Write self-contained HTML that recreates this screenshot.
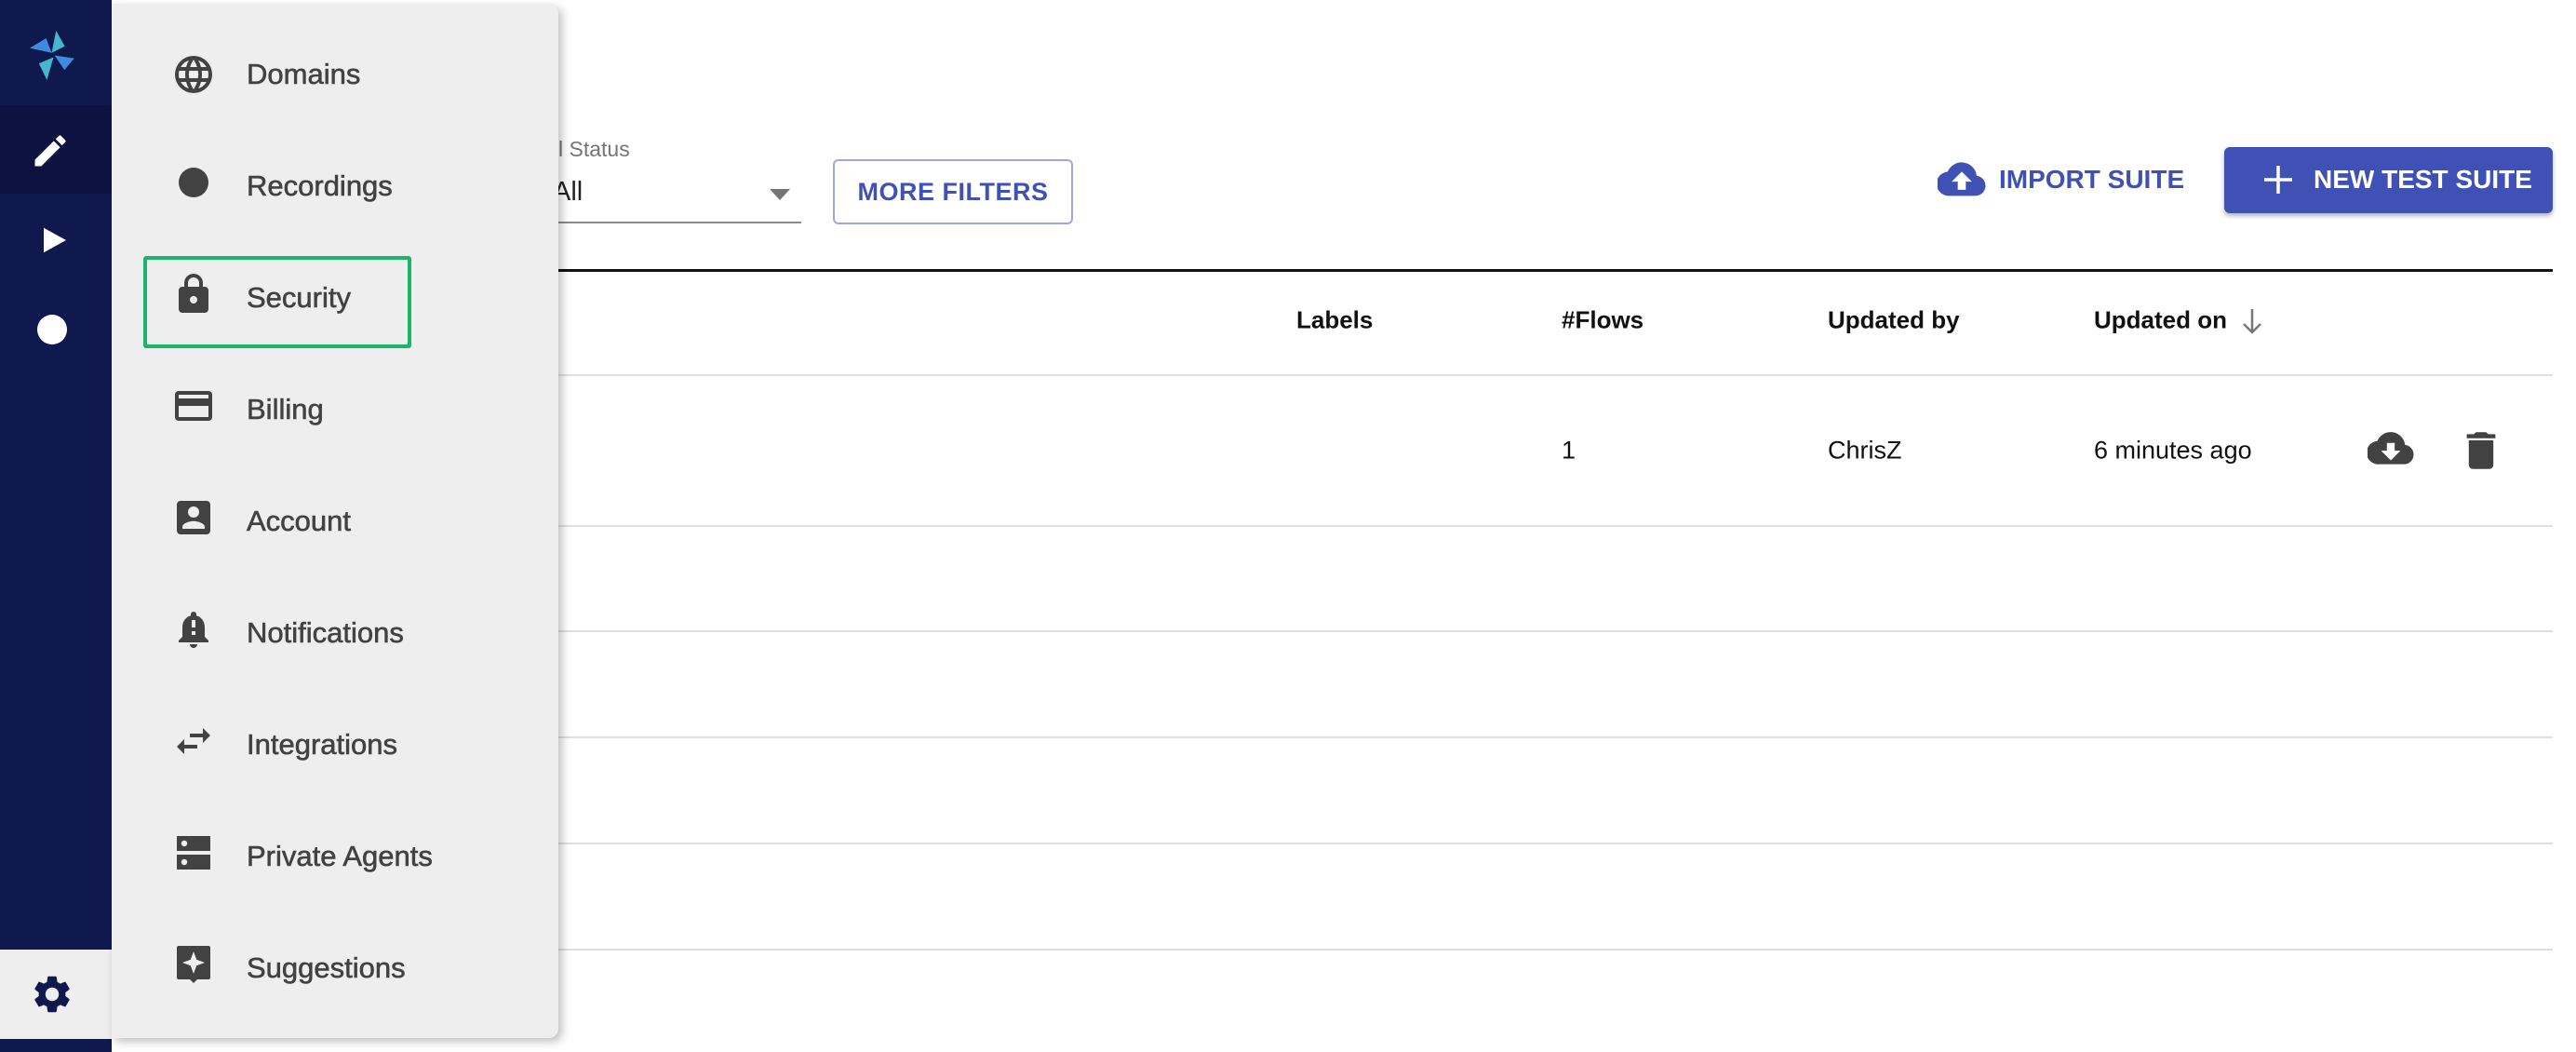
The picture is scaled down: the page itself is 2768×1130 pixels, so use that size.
<!DOCTYPE html>
<html><head><meta charset="utf-8"><style>
*{margin:0;padding:0;box-sizing:border-box}
body{width:2768px;height:1130px;background:#fff;position:relative;overflow:hidden;font-family:"Liberation Sans",sans-serif}
.a{position:absolute}
.side{left:0;top:0;width:120px;height:1130px;background:#10194d}
.menu{left:120px;top:4px;width:480px;height:1111px;background:#eeeeee;border-radius:0 10px 10px 0;box-shadow:4px 4px 10px rgba(0,0,0,.25)}
.mi{position:absolute;left:265px;font-size:31px;color:#424242;transform:translateY(-50%);white-space:nowrap;-webkit-text-stroke:0.6px #424242}
.ic{position:absolute;left:184px;width:48px;height:48px;transform:translateY(-50%)}
.th{position:absolute;font-size:26px;font-weight:bold;color:#111;top:344px;transform:translateY(-50%)}
.td{position:absolute;font-size:27px;color:#111;top:484px;transform:translateY(-50%)}
.ln{position:absolute;left:600px;width:2143px;height:2px;background:#e0e0e0}
</style></head><body>
<div class="a side"></div>
<div class="a" style="left:0;top:113px;width:120px;height:95px;background:#0d1240"></div>
<!-- logo -->
<svg class="a" style="left:32px;top:32px" width="49" height="55" viewBox="80 80 125 140">
<polygon points="80,130 125,103 140,143" fill="#3f8be0"/>
<polygon points="152,82 176,125 140,143" fill="#46b5d0"/>
<polygon points="202,158 148,150 175,190" fill="#3f8be0"/>
<polygon points="127,218 105,172 145,155" fill="#46b5d0"/>
</svg>
<!-- pencil -->
<svg class="a" style="left:32px;top:140px" width="44" height="44" viewBox="0 0 24 24"><path fill="#fff" d="M3 17.25V21h3.75L17.81 9.94l-3.75-3.75L3 17.25zM20.71 7.04a1 1 0 000-1.41l-2.34-2.34a1 1 0 00-1.41 0l-1.83 1.83 3.75 3.75 1.83-1.83z"/></svg>
<svg class="a" style="left:47px;top:244px" width="24" height="28" viewBox="0 0 10 11"><polygon points="0,0 10,5.5 0,11" fill="#fff"/></svg>
<div class="a" style="left:40px;top:338px;width:32px;height:32px;border-radius:50%;background:#fff"></div>
<div class="a" style="left:0;top:1020px;width:120px;height:96px;background:#eeeeee"></div>
<svg class="a" style="left:32px;top:1044px" width="48" height="48" viewBox="0 0 24 24"><path fill="#10194d" d="M19.14 12.94c.04-.3.06-.61.06-.94 0-.32-.02-.64-.07-.94l2.030-1.58a.49.49 0 00.12-.61l-1.92-3.32a.49.49 0 00-.59-.22l-2.39.96c-.5-.38-1.03-.7-1.62-.94l-.36-2.54a.48.48 0 00-.48-.41h-3.84c-.24 0-.43.17-.47.41l-.36 2.54c-.59.24-1.130.57-1.62.94l-2.39-.96a.48.48 0 00-.59.22L2.74 8.87a.47.47 0 00.12.61l2.03 1.58c-.05.3-.09.63-.09.94s.02.64.07.94l-2.03 1.58a.49.49 0 00-.12.61l1.92 3.32c.12.22.37.29.59.22l2.39-.96c.5.38 1.03.7 1.62.94l.36 2.54c.05.24.24.41.48.41h3.84c.24 0 .44-.17.47-.41l.36-2.54c.59-.24 1.13-.56 1.62-.94l2.39.96c.22.08.47 0 .59-.22l1.92-3.32a.46.46 0 00-.12-.61l-2.01-1.58zM12 15.6A3.6 3.6 0 1112 8.4a3.6 3.6 0 010 7.2z"/></svg>

<!-- main -->
<div class="a" style="left:600px;top:147px;font-size:23px;color:#757575">l Status</div>
<div class="a" style="left:594px;top:190px;font-size:29px;color:#222">All</div>
<div class="a" style="left:600px;top:238px;width:261px;height:2px;background:#8a8a8a"></div>
<svg class="a" style="left:827px;top:203px" width="22" height="12" viewBox="0 0 22 12"><polygon points="0,0 22,0 11,12" fill="#757575"/></svg>
<div class="a" style="left:895px;top:171px;width:258px;height:70px;border:2px solid #9fa8da;border-radius:6px;color:#3f51b5;font-size:27px;font-weight:bold;display:flex;align-items:center;justify-content:center;letter-spacing:.5px">MORE FILTERS</div>
<svg class="a" style="left:2082px;top:172px" width="52" height="42" viewBox="0 0 24 18"><path fill="#3f51b5" d="M19.35 7.04A7.49 7.49 0 005 5.04 6 6 0 006 17h13a5 5 0 00.35-9.96zM14 10v4h-4v-4H7l5-5 5 5h-3z"/></svg>
<div class="a" style="left:2148px;top:177px;font-size:28px;font-weight:bold;color:#3f51b5">IMPORT SUITE</div>
<div class="a" style="left:2390px;top:158px;width:353px;height:71px;background:#3f51b5;border-radius:6px;box-shadow:0 3px 5px rgba(0,0,0,.3)"></div>
<svg class="a" style="left:2430px;top:175px" width="36" height="36" viewBox="0 0 36 36"><path d="M18 3v30M3 18h30" stroke="#fff" stroke-width="3.5"/></svg>
<div class="a" style="left:2486px;top:177px;font-size:28px;font-weight:bold;color:#fff">NEW TEST SUITE</div>

<div class="a" style="left:600px;top:289px;width:2143px;height:3px;background:#111"></div>
<div class="th" style="left:1393px">Labels</div>
<div class="th" style="left:1678px">#Flows</div>
<div class="th" style="left:1964px">Updated by</div>
<div class="th" style="left:2250px">Updated on</div>
<svg class="a" style="left:2408px;top:330px" width="24" height="30" viewBox="0 0 24 30"><path d="M12 2v25M3 18l9 9 9-9" stroke="#777" stroke-width="2.5" fill="none"/></svg>
<div class="ln" style="top:402px"></div>
<div class="td" style="left:1678px">1</div>
<div class="td" style="left:1964px">ChrisZ</div>
<div class="td" style="left:2250px">6 minutes ago</div>
<svg class="a" style="left:2544px;top:462px" width="50" height="40" viewBox="0 0 24 18"><path fill="#424242" d="M19.35 7.04A7.49 7.49 0 005 5.04 6 6 0 006 17h13a5 5 0 00.35-9.96zM17 10l-5 5-5-5h3V6h4v4h3z"/></svg>
<svg class="a" style="left:2648px;top:462px" width="36" height="44" viewBox="4 2 16 20"><path fill="#424242" d="M6 19a2 2 0 002 2h8a2 2 0 002-2V7H6v12zM19 4h-3.5l-1-1h-5l-1 1H5v2h14V4z"/></svg>
<div class="ln" style="top:564px"></div>
<div class="ln" style="top:677px"></div>
<div class="ln" style="top:791px"></div>
<div class="ln" style="top:905px"></div>
<div class="ln" style="top:1019px"></div>

<!-- menu -->
<div class="a menu"></div>
<div class="a" style="left:154px;top:275px;width:288px;height:99px;border:4px solid #1eb36b;border-radius:3px"></div>
<svg class="ic" style="top:80px" viewBox="0 0 24 24"><path fill="#424242" d="M12 2a10 10 0 100 20 10 10 0 000-20zm6.93 6h-2.95a15.65 15.65 0 00-1.38-3.56A8.030 8.030 0 0118.93 8zM12 4.04c.83 1.2 1.48 2.53 1.91 3.96h-3.82c.43-1.43 1.08-2.76 1.91-3.960zM4.26 14C4.1 13.36 4 12.69 4 12s.1-1.36.26-2h3.38c-.08.66-.14 1.32-.14 2s.06 1.34.14 2H4.26zm.82 2h2.95c.32 1.25.78 2.45 1.38 3.56A7.99 7.99 0 015.08 16zm2.95-8H5.08a7.99 7.99 0 014.33-3.56A15.65 15.65 0 008.03 8zM12 19.96c-.83-1.2-1.48-2.53-1.91-3.96h3.82c-.43 1.43-1.08 2.76-1.91 3.96zM14.34 14H9.66c-.09-.66-.16-1.32-.16-2s.07-1.35.16-2h4.68c.09.65.16 1.32.16 2s-.07 1.34-.16 2zm.25 5.56c.6-1.11 1.06-2.31 1.38-3.56h2.95a8.03 8.03 0 01-4.33 3.56zM16.36 14c.08-.66.14-1.32.14-2s-.06-1.34-.14-2h3.38c.16.64.26 1.31.26 2s-.1 1.36-.26 2h-3.38z"/></svg>
<div class="mi" style="top:80px">Domains</div>
<svg class="ic" style="top:196px" viewBox="0 0 24 24"><circle cx="12" cy="12" r="8" fill="#424242"/></svg>
<div class="mi" style="top:200px">Recordings</div>
<svg class="ic" style="top:316px" viewBox="0 0 24 24"><path fill="#424242" d="M18 8h-1V6A5 5 0 007 6v2H6a2 2 0 00-2 2v10a2 2 0 002 2h12a2 2 0 002-2V10a2 2 0 00-2-2zm-6 9a2 2 0 110-4 2 2 0 010 4zM9 8V6a3 3 0 016 0v2H9z"/></svg>
<div class="mi" style="top:320px">Security</div>
<svg class="ic" style="top:436px" viewBox="0 0 24 24"><path fill="#424242" d="M20 4H4a2 2 0 00-2 2v12a2 2 0 002 2h16a2 2 0 002-2V6a2 2 0 00-2-2zm0 14H4v-6h16v6zm0-10H4V6h16v2z"/></svg>
<div class="mi" style="top:440px">Billing</div>
<svg class="ic" style="top:556px" viewBox="0 0 24 24"><path fill="#424242" d="M3 5v14a2 2 0 002 2h14a2 2 0 002-2V5a2 2 0 00-2-2H5a2 2 0 00-2 2zm12 4a3 3 0 11-6 0 3 3 0 016 0zm-9 8c0-2 4-3.1 6-3.1s6 1.1 6 3.1v1H6v-1z"/></svg>
<div class="mi" style="top:560px">Account</div>
<svg class="ic" style="top:676px" viewBox="0 0 24 24"><path fill="#424242" d="M12 22a2 2 0 002-2h-4a2 2 0 002 2zm6-6v-5c0-3.07-1.64-5.64-4.5-6.32V4a1.5 1.5 0 00-3 0v.68C7.63 5.36 6 7.920 6 11v5l-2 2v1h16v-1l-2-2zm-5-1h-2v-2h2v2zm0-4h-2V7h2v4z"/></svg>
<div class="mi" style="top:680px">Notifications</div>
<svg class="ic" style="top:796px" viewBox="0 0 24 24"><path fill="#424242" d="M6.99 11L3 15l3.99 4v-3H14v-2H6.99v-3zM21 9l-3.99-4v3H10v2h7.01v3L21 9z"/></svg>
<div class="mi" style="top:800px">Integrations</div>
<svg class="ic" style="top:916px" viewBox="0 0 24 24"><path fill="#424242" d="M3 3h18v8H3zM3 13h18v8H3z"/><circle cx="7" cy="7" r="1.6" fill="#eee"/><circle cx="7" cy="17" r="1.6" fill="#eee"/></svg>
<div class="mi" style="top:920px">Private Agents</div>
<svg class="ic" style="top:1036px" viewBox="0 0 24 24"><path fill="#424242" d="M4 2h16a1 1 0 011 1v16a1 1 0 01-1 1h-6l-2 2-2-2H4a1 1 0 01-1-1V3a1 1 0 011-1z"/><path fill="#eee" d="M12 5l1.6 4.4L18 11l-4.4 1.6L12 17l-1.6-4.4L6 11l4.4-1.6z"/></svg>
<div class="mi" style="top:1040px">Suggestions</div>
</body></html>
